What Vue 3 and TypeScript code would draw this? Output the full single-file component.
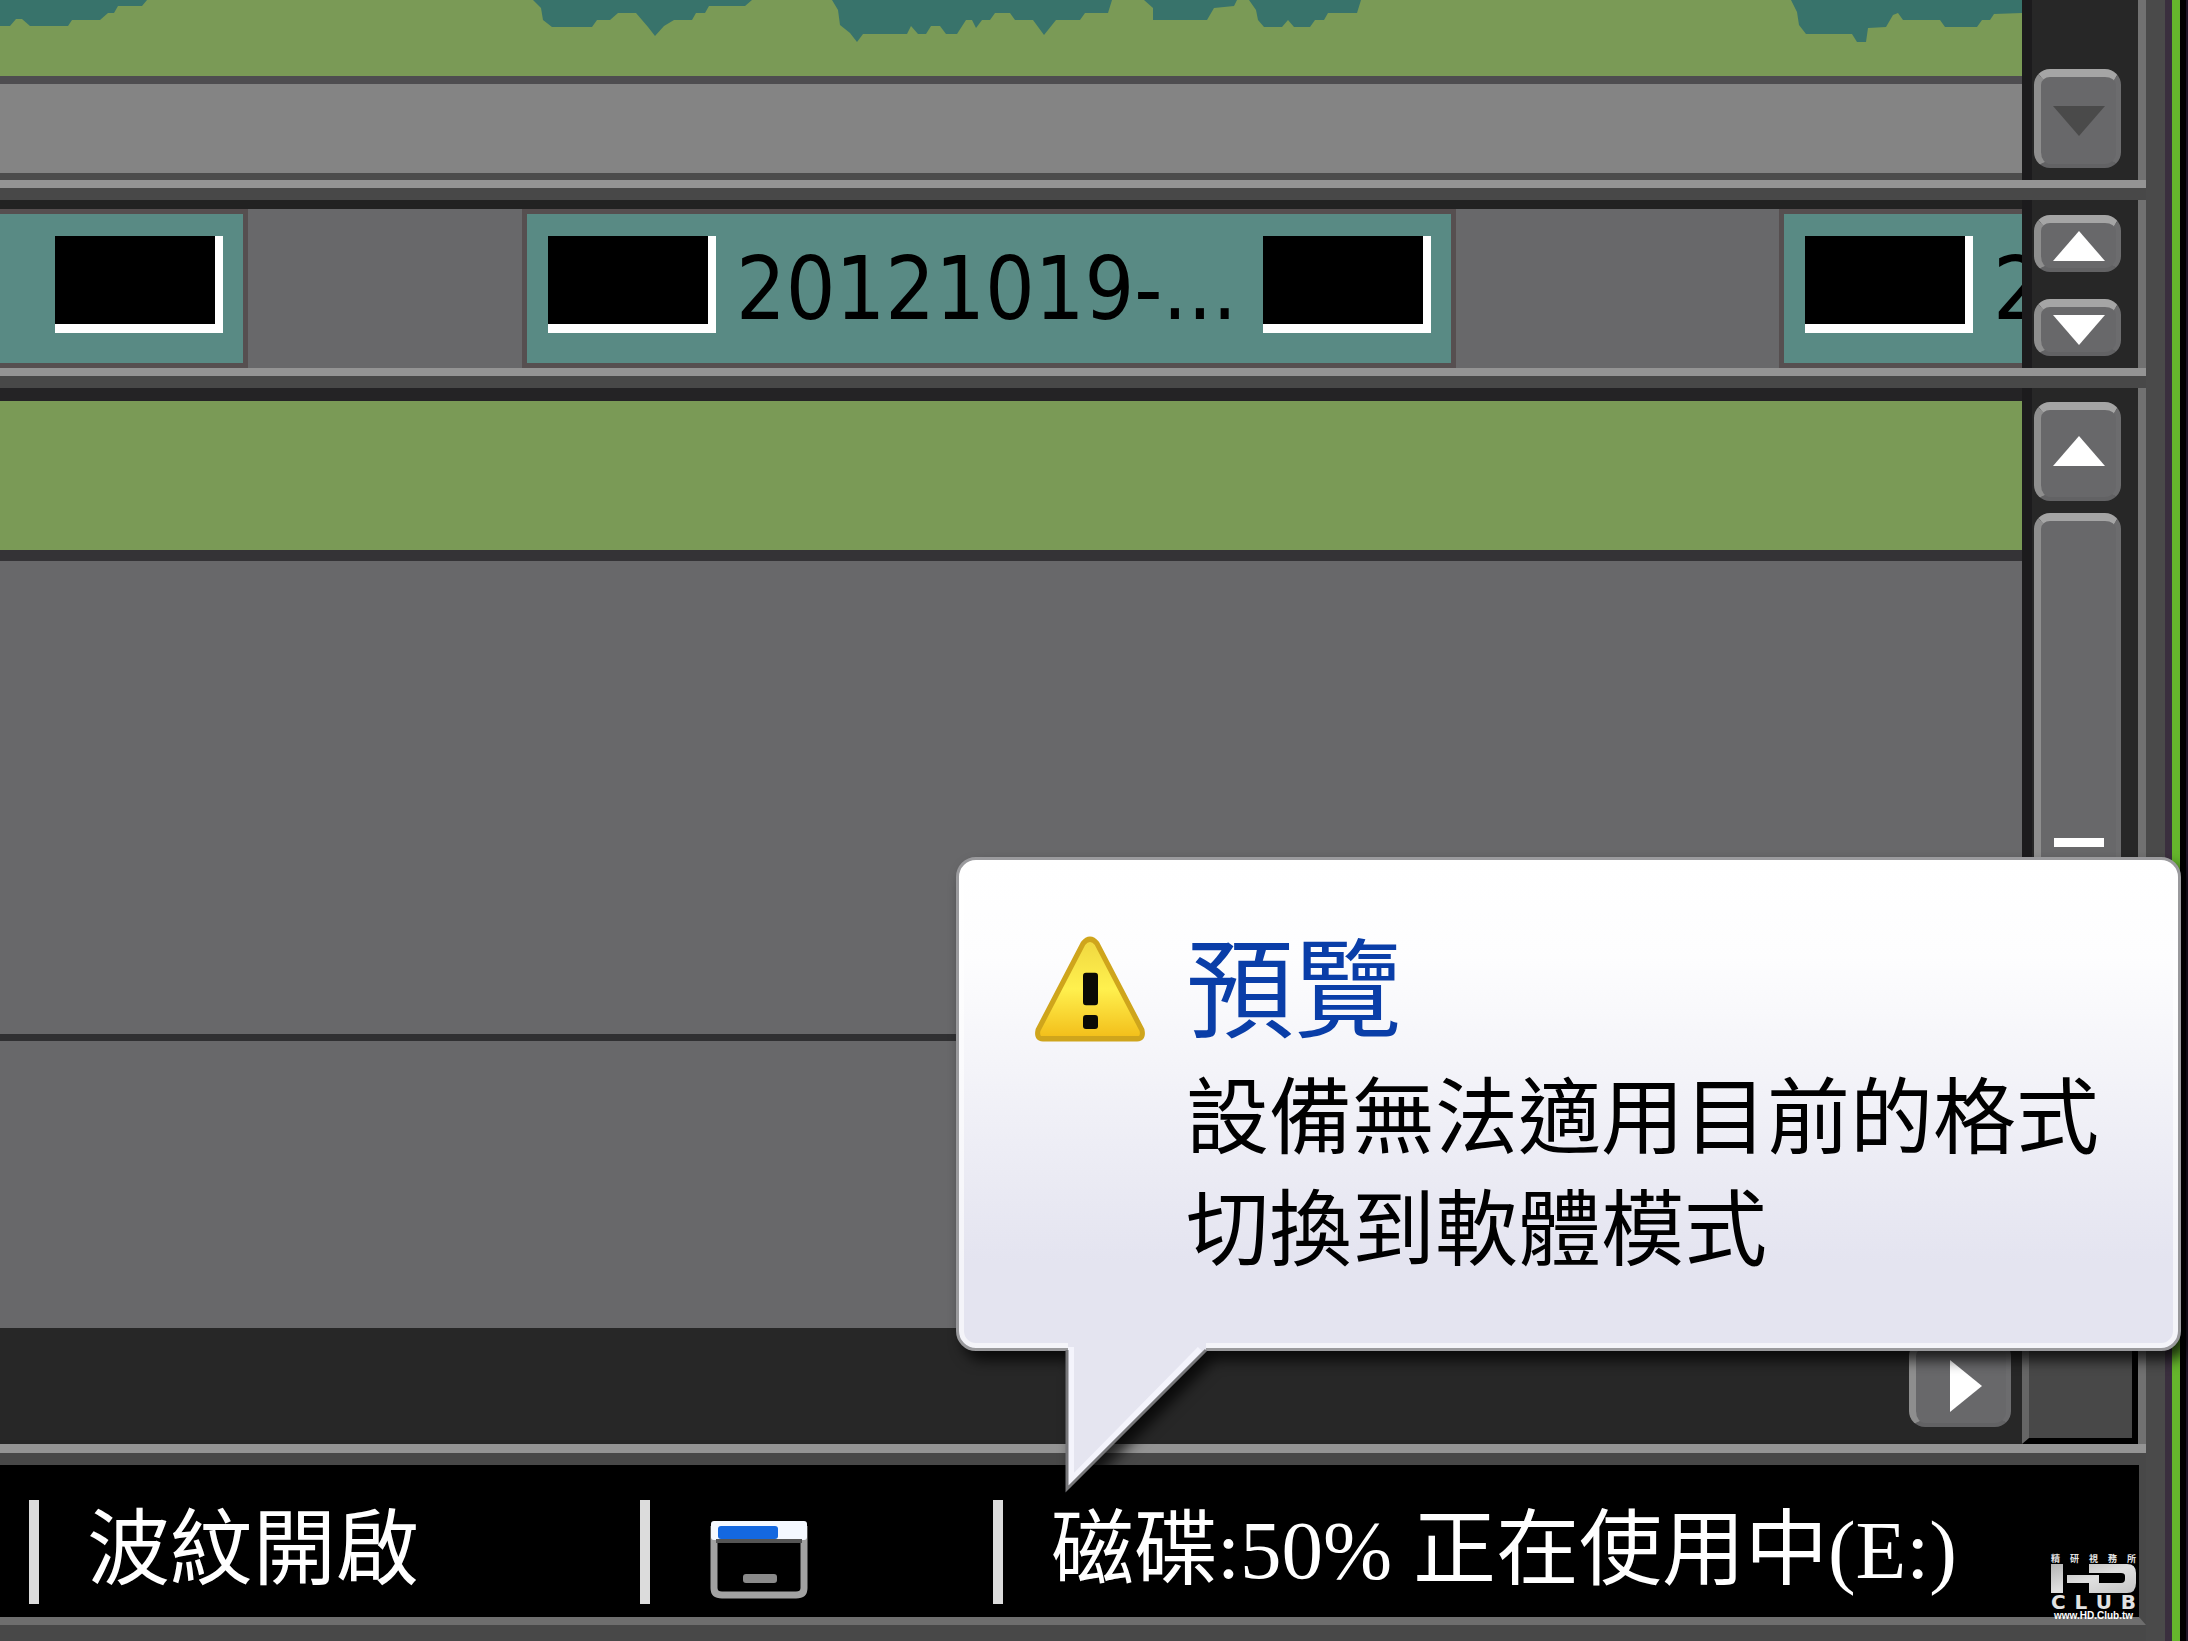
<script setup lang="ts">
interface Clip {
  kind: 'tail' | 'full' | 'head'
  label: string
}

const waves: string[] = [
  'M0 0V26H10L16 19H22L30 26H68L72 20H100L108 13H114L118 6H142L147 0Z',
  'M533 0L541 8L543 20L552 27H592L597 20H610L618 13H636L648 27L655 36L664 26L674 20H692L696 13H705L709 6H745L752 0Z',
  'M832 0L838 10L840 25L850 33L857 42L863 34H907L911 26L918 34H926L931 26H940L946 34H957L966 20H972L976 28L982 20H990L995 13H1010L1015 20H1033L1044 35L1056 20H1080L1085 13H1108L1112 0Z',
  'M1144 0L1153 8V20H1207L1214 8L1234 6L1237 0Z',
  'M1249 0L1256 10L1258 20L1264 27H1282L1288 20L1294 27H1310L1315 20H1324L1328 13H1357L1361 0Z',
  'M1791 0L1797 12L1799 25L1806 34H1852L1857 42H1866L1868 28L1886 27L1893 15L1898 13L1903 20H1940L1945 27H1977L1982 20H1990L1994 14L2022 13V0Z',
]

const clips: Clip[] = [
  { kind: 'tail', label: '' },
  { kind: 'full', label: '20121019-...' },
  { kind: 'head', label: '2' },
]

const logoCaption: string[] = ['精', '研', '視', '務', '所']
const logoWord: string[] = ['C', 'L', 'U', 'B']
</script>

<template>
  <div class="app">
    <main class="workspace">
      <section class="panel panel-audio">
        <div class="panel-body">
          <div class="tracks">
            <div class="wave-track">
              <svg class="wave" width="2022" height="76" viewBox="0 0 2022 76" aria-hidden="true">
                <path v-for="w in waves" :key="w" :d="w" fill="#38736b" />
              </svg>
            </div>
            <div class="empty-track"></div>
          </div>
          <div class="scrollbar bottom">
            <button class="btn tall" type="button" aria-label="Scroll down" disabled>
              <svg width="52" height="30" viewBox="0 0 52 30"><path d="M0 0H52L26 30Z" fill="#4a4a4a" /></svg>
            </button>
          </div>
        </div>
      </section>

      <section class="panel panel-video">
        <div class="panel-body">
          <div class="clip-track">
            <div v-for="(clip, i) in clips" :key="i" class="clip" :class="clip.kind">
              <span v-if="clip.kind !== 'tail'" class="frame"></span>
              <span v-if="clip.label" class="clip-label">{{ clip.label }}</span>
              <span v-if="clip.kind !== 'head'" class="frame"></span>
            </div>
          </div>
          <div class="scrollbar pair">
            <button class="btn short" type="button" aria-label="Track up">
              <svg width="52" height="30" viewBox="0 0 52 30"><path d="M26 0L52 30H0Z" fill="#fff" /></svg>
            </button>
            <button class="btn short" type="button" aria-label="Track down">
              <svg width="52" height="30" viewBox="0 0 52 30"><path d="M0 0H52L26 30Z" fill="#fff" /></svg>
            </button>
          </div>
        </div>
      </section>

      <section class="panel panel-tracks">
        <div class="panel-body grid">
          <div class="tracks lanes">
            <div class="green-track"></div>
            <div class="lane first"></div>
            <div class="lane"></div>
          </div>
          <div class="scrollbar">
            <button class="btn tall up" type="button" aria-label="Scroll up">
              <svg width="52" height="30" viewBox="0 0 52 30"><path d="M26 0L52 30H0Z" fill="#fff" /></svg>
            </button>
            <div class="thumb"><span class="grip"></span></div>
          </div>
          <div class="hscroll">
            <button class="btn right" type="button" aria-label="Scroll right">
              <svg width="32" height="52" viewBox="0 0 32 52"><path d="M0 0L32 26L0 52Z" fill="#fff" /></svg>
            </button>
          </div>
          <div class="corner"></div>
        </div>
      </section>

      <footer class="status">
        <div class="cell ripple">波紋開啟</div>
        <div class="cell window">
          <svg width="98" height="80" viewBox="0 0 98 80" aria-hidden="true">
            <path d="M4 6V68Q4 75 12 75H86Q94 75 94 68V6" fill="none" stroke="#a2a2a2" stroke-width="7" />
            <rect x="1" y="1" width="96" height="19" rx="3" fill="#f4f8ff" />
            <rect x="8" y="6" width="60" height="13" rx="3" fill="#1468e0" />
            <rect x="6" y="19" width="86" height="4" fill="#555" />
            <rect x="33" y="54" width="34" height="9" rx="3" fill="#8a8a8a" />
          </svg>
        </div>
        <div class="cell disk">磁碟:50% 正在使用中(E:)</div>
      </footer>
    </main>

    <div class="window-edge"></div>

    <div class="balloon" role="alert">
      <svg class="warn" width="112" height="106" viewBox="0 0 112 98" preserveAspectRatio="none" aria-hidden="true">
        <defs>
          <linearGradient id="warnFill" x1="0" y1="0" x2="0" y2="1">
            <stop offset="0" stop-color="#f0d840" />
            <stop offset=".5" stop-color="#fff04e" />
            <stop offset="1" stop-color="#f2bd18" />
          </linearGradient>
        </defs>
        <path d="M49 7Q56 -1 63 7L108 87Q110 95 103 95H9Q2 95 4 87Z" fill="url(#warnFill)" stroke="#cfa51c" stroke-width="5" />
        <rect x="49" y="34" width="15" height="30" rx="3" fill="#0a0a05" />
        <rect x="49" y="73" width="15" height="13" rx="3" fill="#0a0a05" />
      </svg>
      <div class="message">
        <h1>預覽</h1>
        <p>設備無法適用目前的格式<br />切換到軟體模式</p>
      </div>
      <svg class="pointer" width="146" height="156" viewBox="0 0 146 156" aria-hidden="true">
        <path d="M4 0V149L142 10V0Z" fill="#e5e5f0" />
        <path d="M7 7V140L136 9" fill="none" stroke="#f4f4fc" stroke-width="6" />
        <path d="M3 10V149L142 10" fill="none" stroke="#77777a" stroke-width="3" />
      </svg>
    </div>

    <div class="logo">
      <div class="spread caption"><span v-for="c in logoCaption" :key="c">{{ c }}</span></div>
      <svg width="85" height="29" viewBox="0 0 85 29" aria-hidden="true">
        <defs>
          <linearGradient id="markFill" x1="0" y1="0" x2="1" y2="1">
            <stop offset="0" stop-color="#b4b4b4" />
            <stop offset=".5" stop-color="#e0e0e0" />
            <stop offset="1" stop-color="#c4c4c4" />
          </linearGradient>
        </defs>
        <path
          d="M0 0H12V29H0ZM16 11H48V19H70Q74 19 74 15V12Q74 9 70 9H38V0H76Q85 0 85 9V19Q85 29 76 29H38V19H16Z"
          fill="url(#markFill)"
        />
      </svg>
      <div class="spread word"><span v-for="c in logoWord" :key="c">{{ c }}</span></div>
      <div class="site">www.HD.Club.tw</div>
    </div>
  </div>
</template>

<style>
body {
  margin: 0;
  background: #484848;
}
</style>

<style scoped>
.app {
  position: relative;
  display: flex;
  height: 100vh;
  overflow: hidden;
  background: #484848;
  font-family: "Noto Sans CJK TC", sans-serif;
}
.workspace {
  flex: 1;
  min-width: 0;
  display: flex;
  flex-direction: column;
  gap: 12px;
}
.window-edge {
  width: 42px;
  background: linear-gradient(
    to right,
    #4a4a4a 19px,
    #3a2f3e 19px 26px,
    #65b52c 26px 34px,
    #000 34px 40px,
    #1d1426 40px
  );
}
.panel {
  display: flex;
  border-bottom: 8px solid #949494;
}
.panel-body {
  flex: 1;
  min-width: 0;
  display: flex;
  border-right: 8px solid #717171;
}
.tracks {
  flex: 1;
  min-width: 0;
  display: flex;
  flex-direction: column;
}

/* audio panel */
.panel-audio {
  height: 180px;
}
.wave-track {
  height: 76px;
  overflow: hidden;
  background: #7a9a56;
  border-bottom: 8px solid #4e4d50;
}
.wave {
  display: block;
}
.empty-track {
  flex: 1;
  background: #848484;
  border-bottom: 7px solid #4c4c4c;
}

/* video clip panel */
.panel-video {
  height: 168px;
}
.clip-track {
  flex: 1;
  min-width: 0;
  display: flex;
  overflow: hidden;
  background: #68686a;
  border-top: 9px solid #222;
}
.clip {
  flex: none;
  box-sizing: border-box;
  display: flex;
  align-items: flex-start;
  gap: 20px;
  border: 5px solid #564f50;
  background: #598a84;
  padding: 22px 20px 0 21px;
}
.clip.tail {
  width: 248px;
  justify-content: flex-end;
  border-left: 0;
  margin-right: 274px;
}
.clip.full {
  width: 934px;
  margin-right: 323px;
}
.clip.head {
  flex: 1;
  min-width: 0;
  padding-right: 0;
  border-right: 0;
}
.frame {
  flex: none;
  width: 160px;
  height: 88px;
  background: #000;
  border-right: 8px solid #fff;
  border-bottom: 9px solid #fff;
}
.clip-label {
  flex: 1;
  color: #000;
  font: 87px/106px "DejaVu Sans Condensed", "DejaVu Sans", sans-serif;
  white-space: nowrap;
}

/* scroll bars */
.scrollbar {
  box-sizing: border-box;
  width: 116px;
  display: flex;
  flex-direction: column;
  align-items: flex-start;
  padding-left: 12px;
  background: linear-gradient(to right, #1c1b1d 10px, #272727 10px);
}
.scrollbar.bottom {
  justify-content: flex-end;
  padding-bottom: 12px;
}
.scrollbar.pair {
  justify-content: space-between;
  padding-top: 15px;
  padding-bottom: 12px;
}
.btn,
.thumb {
  box-sizing: border-box;
  width: 87px;
  border: solid;
  border-width: 8px 5px 4px 7px;
  border-color: #a5a5a5 #6c6c6e #626264 #8e8e8e;
  border-radius: 16px;
  background: #68686a;
  padding: 0;
  display: flex;
  align-items: center;
  justify-content: center;
}
.btn.tall {
  height: 99px;
}
.btn.short {
  height: 57px;
}
.btn.up {
  padding-bottom: 6px;
}
.btn svg {
  display: block;
  flex: none;
}
.btn.right {
  width: 102px;
  height: 87px;
  padding-left: 10px;
}
.thumb {
  flex: 1;
  margin-top: 12px;
  align-items: flex-start;
  padding-top: 317px;
}
.grip {
  width: 50px;
  height: 9px;
  background: #fff;
}

/* lower track panel */
.panel-tracks {
  flex: 1;
  min-height: 0;
  border-bottom-width: 9px;
}
.panel-body.grid {
  display: grid;
  grid-template-columns: minmax(0, 1fr) 116px;
  grid-template-rows: minmax(0, 1fr) 116px;
}
.grid .scrollbar {
  padding-top: 14px;
}
.lanes {
  border-top: 13px solid #242325;
}
.green-track {
  height: 149px;
  background: #7a9a56;
  border-bottom: 11px solid #343336;
}
.lane {
  flex: 1;
  background: #68686a;
}
.lane.first {
  flex: none;
  height: 473px;
  border-bottom: 7px solid #303032;
}
.hscroll {
  display: flex;
  justify-content: flex-end;
  padding: 12px 11px 0 0;
  background: #272727;
}
.corner {
  border: solid;
  border-width: 0 6px 6px 7px;
  border-color: #000 #000 #000 #666;
  background: #484848;
}

/* status bar */
.status {
  display: flex;
  align-items: center;
  height: 152px;
  margin-bottom: 16px;
  padding-left: 29px;
  border-bottom: 8px solid #6e6e6e;
  border-right: 7px solid #484848;
  background: #000;
  color: #fff;
  font: 83px/100px "Liberation Serif", "Noto Sans CJK TC", serif;
  white-space: nowrap;
}
.cell {
  box-sizing: border-box;
  height: 104px;
  margin-top: 22px;
  border-left: 10px solid #dcdcdc;
  padding-left: 48px;
}
.ripple {
  width: 611px;
}
.window {
  width: 353px;
  padding-left: 60px;
  padding-top: 20px;
}
.window svg {
  display: block;
}
.disk {
  flex: 1;
}

/* notification balloon */
.balloon {
  position: absolute;
  right: 7px;
  bottom: 290px;
  box-sizing: border-box;
  width: 1225px;
  height: 494px;
  display: flex;
  align-items: flex-start;
  gap: 40px;
  padding: 76px 80px 0 75px;
  border: 3px solid #9a9a9d;
  border-radius: 20px;
  background: linear-gradient(#fff 0, #fdfdfe 20%, #f4f4f9 42%, #ebebf4 64%, #e4e4f0 82%);
  box-shadow: inset 0 0 0 5px rgba(255, 255, 255, 0.6);
  filter: drop-shadow(7px 9px 7px rgba(0, 0, 0, 0.75));
}
.warn {
  flex: none;
}
.message {
  margin-top: -8px;
  color: #000;
  white-space: nowrap;
}
.message h1 {
  margin: 0 0 19px;
  color: #0a3ea8;
  font-size: 108px;
  font-weight: 400;
  line-height: 108px;
}
.message p {
  margin: 0;
  font-size: 83px;
  line-height: 112px;
}
.pointer {
  position: absolute;
  left: 105px;
  top: 480px;
}

/* site mark */
.logo {
  position: absolute;
  right: 52px;
  bottom: 20px;
  width: 85px;
  display: flex;
  flex-direction: column;
  color: #e2e2e2;
}
.logo svg {
  display: block;
}
.spread {
  display: flex;
  justify-content: space-between;
}
.caption {
  font-size: 9px;
  font-weight: 700;
  line-height: 11px;
}
.word {
  font: 700 20px/18px "DejaVu Sans", sans-serif;
}
.site {
  font: 700 10px/10px "Liberation Sans", sans-serif;
  text-align: center;
  color: #fff;
}
</style>
